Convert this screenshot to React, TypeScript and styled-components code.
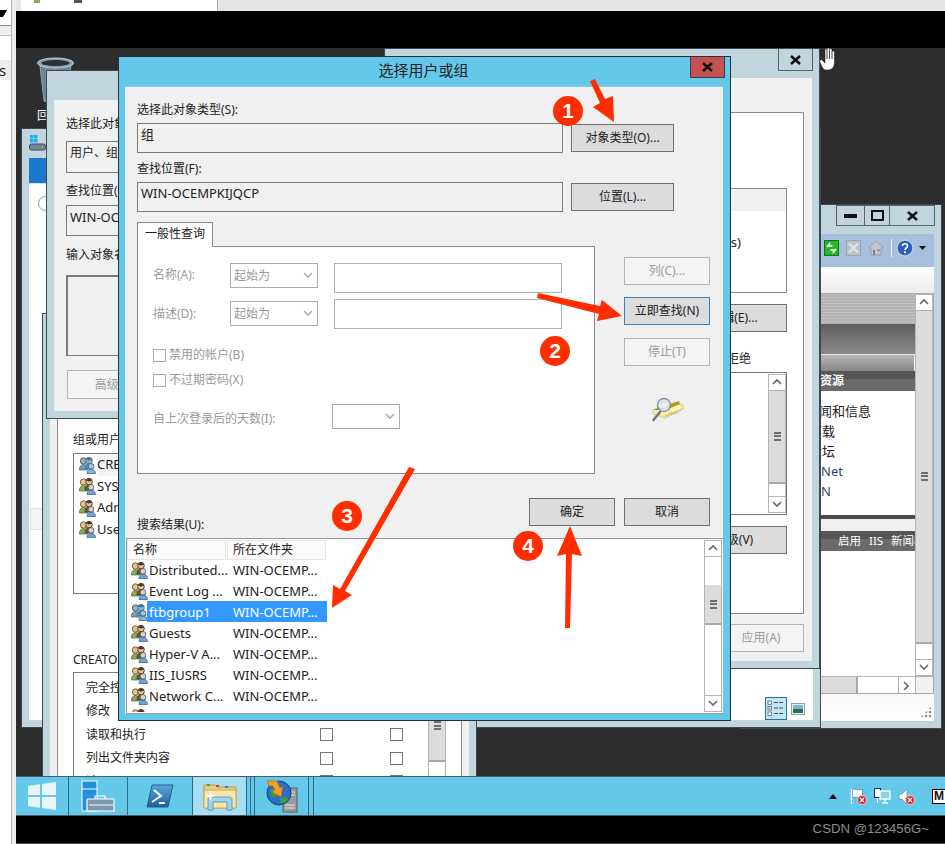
import React from "react";
import styled, { createGlobalStyle } from "styled-components";

const FONT = `"Noto Sans", "Noto Sans CJK SC", sans-serif`;
const CHROME = "#c2d5dc";
const ACCENT = "#63c8ea";
const SHEET = "#f0f0f0";
const EDGE = "#3c4a52";

const Global = createGlobalStyle`
  html, body { margin: 0; padding: 0; background: #000; }
  #root { width: 945px; height: 844px; overflow: hidden; }
  * { box-sizing: border-box; }
`;

const Screen = styled.div`
  position: relative;
  width: 945px;
  height: 844px;
  display: flex;
  overflow: hidden;
  font: 12px/16px ${FONT};
  color: #222;
  background: #000;
`;

/* ---------- left host strip ---------- */
const LeftStrip = styled.div`
  width: 16px;
  flex: none;
  background: #ededed;
`;
const LeftPane = styled.div`
  width: 12px;
  height: 100%;
  background: #fff;
  border-right: 1px solid #b5b5b5;
`;
const ComboStub = styled.div`
  height: 26px;
  border-bottom: 1px solid #8a8a8a;
  padding-top: 10px;
  display: flex;
`;
const StubBand = styled.div`
  height: 10px;
  background: #efefef;
  border-bottom: 1px solid #bdbdbd;
`;
const StubItem = styled.div`
  margin-top: 24px;
  height: 20px;
  background: #eeeeee;
  font-size: 15px;
  line-height: 20px;
  overflow: hidden;
  text-indent: -1px;
`;

/* ---------- main column ---------- */
const Column = styled.div`
  flex: 1;
  min-width: 0;
  display: flex;
  flex-direction: column;
`;
const TopBar = styled.div`
  height: 11px;
  flex: none;
  display: flex;
  background: #e6e6e8;
  padding-left: 5px;
`;
const TopPane = styled.div`
  width: 197px;
  background: #fff;
  border-right: 1px solid #a9a9a9;
  display: flex;
  align-items: flex-start;
  gap: 34px;
  padding-left: 13px;
`;
const TopMark = styled.span<{ $c: string; $w: number }>`
  display: block;
  width: ${(p) => p.$w}px;
  height: 3px;
  background: ${(p) => p.$c};
`;
const BlackBand = styled.div`
  height: 37px;
  flex: none;
  background: #000;
`;
const Desktop = styled.div`
  position: relative;
  height: 728px;
  flex: none;
  background: #2d2d2d;
  overflow: hidden;
`;
const RecycleBin = styled.div`
  position: absolute;
  left: 21px;
  top: 9px;
  width: 44px;
  text-align: left;
  color: #fff;
  font-size: 12px;
`;
const RecycleCaption = styled.div`
  margin-top: 2px;
  line-height: 14px;
`;

/* ---------- windows on the desktop ---------- */
const Win = styled.div<{ $x: number; $y: number; $w: number; $h: number }>`
  position: absolute;
  left: ${(p) => p.$x - 16}px;
  top: ${(p) => p.$y - 48}px;
  width: ${(p) => p.$w}px;
  height: ${(p) => p.$h}px;
  background: ${CHROME};
  border: 1px solid ${EDGE};
  display: flex;
  flex-direction: column;
  overflow: hidden;
`;
const Sheet = styled.div<{ $top: number; $bg?: string }>`
  margin: ${(p) => p.$top}px 7px 7px;
  flex: 1;
  min-height: 0;
  background: ${(p) => p.$bg ?? SHEET};
  display: flex;
  flex-direction: column;
`;
const CaptionClose = styled.div`
  position: absolute;
  right: 6px;
  top: -1px;
  width: 35px;
  height: 23px;
  border: 1px solid #55636b;
  display: flex;
  align-items: center;
  justify-content: center;
`;
const CaptionGroup = styled.div`
  position: absolute;
  right: 6px;
  top: 0;
  display: flex;
  height: 21px;
  border: 1px solid #55636b;
`;
const CaptionCell = styled.div<{ $w: number }>`
  width: ${(p) => p.$w}px;
  display: flex;
  align-items: center;
  justify-content: center;
  & + & { border-left: 1px solid #55636b; }
`;

const Field = styled.div<{ $h: number; $mt?: number; $small?: boolean; $inset?: boolean }>`
  height: ${(p) => p.$h}px;
  margin-top: ${(p) => p.$mt ?? 0}px;
  background: ${SHEET};
  border: 1px solid #7a7a7a;
  border-width: ${(p) => (p.$inset ? "2px 1px 1px 2px" : "1px")};
  padding: 3px 3px;
  font-size: ${(p) => (p.$small ? 12 : 13)}px;
  line-height: 16px;
  white-space: nowrap;
  overflow: hidden;
`;
const FieldLabel = styled.div<{ $mt?: number }>`
  margin-top: ${(p) => p.$mt ?? 0}px;
  font-size: 12px;
  line-height: 16px;
  white-space: nowrap;
`;
const Btn = styled.div<{ $w?: number; $h?: number; $mt?: number; $ml?: number; $state?: "off" | "focus" }>`
  width: ${(p) => (p.$w ? `${p.$w}px` : "100%")};
  height: ${(p) => p.$h ?? 28}px;
  margin-top: ${(p) => p.$mt ?? 0}px;
  margin-left: ${(p) => p.$ml ?? 0}px;
  flex: none;
  display: flex;
  align-items: center;
  justify-content: center;
  font-size: 12px;
  white-space: nowrap;
  background: ${(p) => (p.$state === "off" ? "#f4f4f4" : "#dcdcdc")};
  color: ${(p) => (p.$state === "off" ? "#9b9b9b" : "#222")};
  border: 1px solid
    ${(p) => (p.$state === "off" ? "#b5b5b5" : p.$state === "focus" ? "#3c7fb1" : "#707070")};
`;

/* ---------- scrollbars ---------- */
const ScrollTrack = styled.div`
  width: 18px;
  flex: none;
  height: 100%;
  display: flex;
  flex-direction: column;
  background: #fff;
  border-left: 1px solid #b4b4b4;
  border-right: 1px solid #b4b4b4;
`;
const ScrollBtn = styled.div`
  height: 17px;
  flex: none;
  display: flex;
  align-items: center;
  justify-content: center;
  background: #fff;
  border-top: 1px solid #b4b4b4;
  border-bottom: 1px solid #b4b4b4;
`;
const ScrollGap = styled.div<{ $h?: number }>`
  flex: ${(p) => (p.$h === undefined ? "1" : `0 0 ${p.$h}px`)};
  min-height: 0;
`;
const ScrollThumb = styled.div<{ $h: number }>`
  flex: 0 0 ${(p) => p.$h}px;
  background: #dcdcdc;
  border-bottom: 2px solid #a8a8a8;
  display: flex;
  align-items: center;
  justify-content: center;
`;
const Grip = styled.div`
  width: 7px;
  height: 9px;
  background: repeating-linear-gradient(#6e6e6e 0 2px, transparent 2px 3.5px);
`;

const Chevron = ({ dir, color = "#666" }: { dir: "up" | "down" | "right"; color?: string }) => {
  const d = dir === "up" ? "M1 6l4-4 4 4" : dir === "down" ? "M1 2l4 4 4-4" : "M2 1l4 4-4 4";
  return (
    <svg width="10" height="9" viewBox="0 0 10 9" fill="none" stroke={color} strokeWidth="1.6">
      <path d={d} />
    </svg>
  );
};

const ScrollBar = ({ gap, thumb }: { gap: number; thumb: number }) => (
  <ScrollTrack>
    <ScrollBtn><Chevron dir="up" /></ScrollBtn>
    <ScrollGap $h={gap} />
    <ScrollThumb $h={thumb}><Grip /></ScrollThumb>
    <ScrollGap />
    <ScrollBtn><Chevron dir="down" /></ScrollBtn>
  </ScrollTrack>
);

/* ---------- explorer behind everything ---------- */
const ExplorerIcon = styled.div`
  height: 29px;
  padding: 6px 0 0 7px;
`;
const Ribbon = styled.div`
  height: 26px;
  flex: none;
  border-bottom: 1px solid #dcdcdc;
`;
const FileTab = styled.div`
  width: 17px;
  height: 25px;
  background: #1979ca;
`;
const BackRound = styled.div`
  width: 15px;
  height: 15px;
  margin: 12px 0 0 9px;
  border-radius: 50%;
  border: 1px solid #9a9a9a;
  background: #fff;
`;
const PaleBox = styled.div`
  width: 13px;
  height: 22px;
  margin: 297px 0 0 1px;
  background: #f4f4f4;
  border: 1px solid #e2e2e2;
`;
const ExplorerFoot = styled.div`
  margin-top: auto;
  height: 23px;
  display: flex;
  justify-content: flex-end;
  align-items: center;
  gap: 4px;
  padding-right: 8px;
`;
const ViewBtn = styled.div<{ $on?: boolean }>`
  width: ${(p) => (p.$on ? "22px" : "14px")};
  height: ${(p) => (p.$on ? "23px" : "13px")};
  display: flex;
  align-items: center;
  justify-content: center;
  background: ${(p) => (p.$on ? "#c4e4f6" : "transparent")};
  border: ${(p) => (p.$on ? "1px solid #2f6f9f" : "none")};
`;

/* ---------- IE window ---------- */
const IEToolbar = styled.div`
  height: 33px;
  flex: none;
  background: #a5bfdc;
  display: flex;
  align-items: center;
  justify-content: flex-end;
  gap: 7px;
  padding: 0 8px 5px 0;
`;
const ToolSep = styled.span`
  width: 1px;
  height: 18px;
  margin-right: -3px;
  background: #eef4f9;
`;
const ToolCaretSlot = styled.span`
  display: flex;
  margin-left: -2px;
`;
const IEBand = styled.div`
  height: 27px;
  flex: none;
  background: linear-gradient(#fff, #ececec);
  border-bottom: 1px solid #a8a8a8;
`;
const IEFrame = styled.div`
  height: 400px;
  flex: none;
  background: #fff;
  border-right: 1px solid #a8a8a8;
  border-bottom: 1px solid #a8a8a8;
  display: flex;
  flex-direction: column;
`;
const IEMain = styled.div`
  height: 382px;
  flex: none;
  display: flex;
`;
const IEPage = styled.div`
  flex: 1;
  min-width: 0;
  display: flex;
  flex-direction: column;
  overflow: hidden;
  background: #fff;
`;
const Banner = styled.div<{ $h: number; $bg: string; $framed?: boolean }>`
  height: ${(p) => p.$h}px;
  flex: none;
  background: ${(p) => p.$bg};
  border-top: ${(p) => (p.$framed ? "1px solid #dfe3ea" : "none")};
  border-right: ${(p) => (p.$framed ? "1px solid #eef0f4" : "none")};
`;
const BannerBar = styled.div<{ $h: number; $pl: number; $bold?: boolean }>`
  height: ${(p) => p.$h}px;
  flex: none;
  color: #fff;
  font-size: ${(p) => (p.$bold ? 12 : 11.5)}px;
  font-weight: ${(p) => (p.$bold ? 700 : 400)};
  line-height: 20px;
  padding-left: ${(p) => p.$pl}px;
  word-spacing: 5px;
  white-space: nowrap;
  overflow: hidden;
  background: linear-gradient(#565656 0 40%, #6a6a6a 40% 100%);
`;
const LinkList = styled.div`
  flex: 0 0 124px;
  padding-top: 10px;
  font-size: 13px;
  line-height: 20px;
  white-space: nowrap;
`;
const LinkItem = styled.div<{ $pl: number; $blue?: boolean }>`
  padding-left: ${(p) => p.$pl}px;
  color: ${(p) => (p.$blue ? "#2c4a6a" : "#222")};
`;
const HBar = styled.div`
  height: 17px;
  flex: none;
  display: flex;
  background: #fff;
  border-top: 1px solid #b4b4b4;
`;
const HThumb = styled.div`
  flex: 1;
  background: #dcdcdc;
  border-right: 2px solid #a8a8a8;
`;
const HGap = styled.div`
  width: 40px;
`;
const HBtn = styled.div`
  width: 17px;
  display: flex;
  align-items: center;
  justify-content: center;
  border-left: 1px solid #b4b4b4;
`;
const HCorner = styled.div`
  width: 18px;
  background: #f0f0f0;
  border-left: 1px solid #b4b4b4;
`;
const IEStatus = styled.div`
  flex: 1;
  background: linear-gradient(#f8f8f8, #fff);
  display: flex;
  justify-content: flex-end;
  align-items: flex-end;
  padding: 0 2px 3px 0;
`;
const StatusGrip = styled.div`
  width: 12px;
  height: 12px;
  background: radial-gradient(circle at 2px 2px, #888 0 1.4px, transparent 1.6px) 0 0 / 4px 4px;
  clip-path: polygon(100% 0, 100% 100%, 0 100%);
`;

/* ---------- lower left properties ---------- */
const WhitePanel = styled.div<{ $mt: number; $pt: number }>`
  margin-top: ${(p) => p.$mt}px;
  flex: 1;
  min-height: 0;
  background: #fff;
  border: 1px solid #8a8a8a;
  padding: ${(p) => p.$pt}px 15px 0;
`;
const UserBox = styled.div<{ $h: number; $mt?: number }>`
  height: ${(p) => p.$h}px;
  margin-top: ${(p) => p.$mt ?? 0}px;
  border: 1px solid #7a7a7a;
  padding: 0 0 0 5px;
  background: #fff;
  overflow: hidden;
`;
const UserRow = styled.div`
  height: 21.5px;
  display: flex;
  align-items: center;
  gap: 1px;
  font-size: 13px;
  white-space: nowrap;
`;
const UserName = styled.span<{ $hover?: boolean }>`
  flex: 1;
  height: 100%;
  line-height: 21px;
  background: ${(p) => (p.$hover ? "#f4f4f4" : "transparent")};
`;
const PermBox = styled.div`
  height: 140px;
  margin-top: 4px;
  border: 1px solid #7a7a7a;
  border-right: none;
  display: flex;
  overflow: hidden;
`;
const PermRows = styled.div`
  flex: 1;
  padding: 3px 0 0 12px;
`;
const PermRow = styled.div`
  height: 23.5px;
  display: grid;
  grid-template-columns: 234px 70px 13px;
  align-items: center;
  font-size: 12px;
`;
const Check = styled.span<{ $off?: boolean }>`
  display: block;
  width: 13px;
  height: 13px;
  flex: none;
  background: #fff;
  border: 1px solid ${(p) => (p.$off ? "#adadad" : "#777")};
`;

/* ---------- right properties window ---------- */
const PropsPanel = styled.div`
  margin: 34px 0 0 0;
  height: 502px;
  background: #fff;
  border: 1px solid #8a8a8a;
  padding: 75px 16px 0 16px;
  display: flex;
  flex-direction: column;
  align-items: flex-end;
`;
const PropsList = styled.div`
  width: 379px;
  height: 105px;
  border: 1px solid #8a8a8a;
  flex: none;
`;
const PropsHead = styled.div`
  height: 22px;
  background: #f0f0f0;
`;
const PropsItem = styled.div`
  margin-top: 23px;
  padding-right: 45px;
  text-align: right;
  font-size: 13px;
  white-space: nowrap;
`;
const DenyHead = styled.div`
  margin-top: 19px;
  padding-right: 36px;
  font-size: 12px;
`;
const PermList = styled.div`
  margin-top: 5px;
  width: 379px;
  height: 143px;
  border: 1px solid #7a7a7a;
  border-right-width: 1px;
  padding: 1px 0;
  flex: none;
  display: flex;
  justify-content: flex-end;
`;
const PropsFoot = styled.div`
  margin-top: 10px;
  display: flex;
  justify-content: flex-end;
`;
const SheetInset = styled.div<{ $pad: number }>`
  padding: 0 ${(p) => p.$pad}px;
  display: flex;
  flex-direction: column;
  flex: 1;
  min-height: 0;
`;
const BackForm = styled.div`
  padding: 16px 12px 0;
`;

/* ---------- main dialog ---------- */
const Dialog = styled(Win)`
  background: ${ACCENT};
  border-color: #22313a;
`;
const DialogBar = styled.div`
  height: 29px;
  flex: none;
  font-size: 15px;
  line-height: 27px;
  text-align: center;
  padding-right: 2px;
`;
const DialogClose = styled.div`
  position: absolute;
  right: 5px;
  top: -1px;
  width: 35px;
  height: 22px;
  background: #c75050;
  border: 1px solid #33424c;
  display: flex;
  align-items: center;
  justify-content: center;
`;
const DialogBody = styled.div`
  margin: 0 7px 6px 6px;
  flex: 1;
  min-height: 0;
  background: ${SHEET};
  display: flex;
  flex-direction: column;
  border-top: 1px solid #8fc6db;
  padding-top: 15px;
`;
const Rowed = styled.div<{ $mt?: number }>`
  margin-top: ${(p) => p.$mt ?? 0}px;
  padding: 0 49px 0 12px;
`;
const PickRow = styled.div`
  margin-top: 5px;
  display: flex;
  gap: 8px;
  align-items: flex-start;
`;
const ReadBox = styled.div`
  flex: 1;
  height: 30px;
  border: 1px solid #7a7a7a;
  padding: 2px 3px;
  font-size: 13px;
  line-height: 16px;
`;
const PickBtnWrap = styled.div`
  padding-top: 1px;
`;
const QuerySplit = styled.div`
  margin-top: 10px;
  padding: 0 13px 0 12px;
  display: flex;
  justify-content: space-between;
`;
const QueryArea = styled.div`
  width: 458px;
`;
const TabHead = styled.div`
  position: relative;
  z-index: 1;
  width: 76px;
  height: 25px;
  padding: 3px 0 0 7px;
  font-size: 12px;
  line-height: 16px;
  background: #fff;
  border: 1px solid #8a8a94;
  border-bottom: none;
`;
const TabPanel = styled.div`
  margin-top: -1px;
  height: 228px;
  background: #fff;
  border: 1px solid #8a8a94;
  padding: 16px 0 0 15px;
  color: #9a9a9a;
`;
const CritRow = styled.div<{ $mt?: number }>`
  margin-top: ${(p) => p.$mt ?? 0}px;
  display: grid;
  grid-template-columns: 77px 88px 228px;
  column-gap: 0;
  height: 30px;
  align-items: start;
`;
const CritLabel = styled.div<{ $pt: number }>`
  padding-top: ${(p) => p.$pt}px;
  line-height: 20px;
  white-space: nowrap;
`;
const CritBox = styled.div`
  margin-left: 16px;
  width: 228px;
  height: 30px;
  border: 1px solid #b0b0b0;
`;
const Select = styled.div<{ $w: number; $mt?: number }>`
  width: ${(p) => p.$w}px;
  height: 25px;
  margin-top: ${(p) => p.$mt ?? 0}px;
  border: 1px solid #adadad;
  padding: 0 4px 0 3px;
  display: flex;
  align-items: center;
  justify-content: space-between;
  font-size: 12px;
  color: #999;
`;
const CheckRow = styled.div<{ $mt: number }>`
  margin-top: ${(p) => p.$mt}px;
  display: flex;
  align-items: center;
  gap: 3px;
  height: 16px;
  white-space: nowrap;
`;
const DayRow = styled.div`
  margin-top: 16px;
  display: flex;
  align-items: center;
  height: 25px;
  white-space: nowrap;
`;
const DayLabel = styled.div`
  width: 179px;
  padding-top: 4px;
`;
const ActionColumn = styled.div`
  width: 86px;
  padding-top: 35px;
  display: flex;
  flex-direction: column;
`;
const SearchArt = styled.div`
  margin: 31px 0 0 27px;
`;
const ResultHead = styled.div`
  margin-top: 24px;
  padding: 0 13px 0 12px;
  height: 28px;
  display: flex;
  gap: 9px;
  align-items: flex-start;
  position: relative;
`;
const ResultLabel = styled.div`
  margin: 19px auto 0 0;
  line-height: 16px;
`;
const ResultList = styled.div`
  margin: 12px 0 0 1px;
  flex: 1;
  min-height: 0;
  display: flex;
  background: #fff;
  border: 1px solid #9a9a9a;
  border-right: none;
  padding: 1px 1px 1px 0;
  overflow: hidden;
`;
const ResultMain = styled.div`
  flex: 1;
  min-width: 0;
  overflow: hidden;
`;
const ColHead = styled.div`
  display: flex;
  height: 19px;
  background: #fff;
`;
const ColCell = styled.div<{ $w: number }>`
  width: ${(p) => p.$w}px;
  height: 20px;
  margin-right: 1px;
  background: #fbfbfb;
  border: 1px solid #e6e6e6;
  padding-left: 5px;
  line-height: 18px;
  font-size: 12px;
`;
const ResultRow = styled.div`
  height: 21px;
  display: flex;
  align-items: center;
  white-space: nowrap;
  font-size: 13px;
`;
const RowIcon = styled.div`
  width: 20px;
  padding-left: 4px;
  display: flex;
  flex: none;
`;
const RowCells = styled.div<{ $sel?: boolean }>`
  width: 180px;
  height: 21px;
  display: grid;
  grid-template-columns: 84px 96px;
  align-items: center;
  padding-left: 2px;
  background: ${(p) => (p.$sel ? "#3399ff" : "transparent")};
  color: ${(p) => (p.$sel ? "#fff" : "#222")};
`;

/* ---------- taskbar ---------- */
const Taskbar = styled.div`
  height: 40px;
  flex: none;
  background: ${ACCENT};
  border-top: 1px solid #4f5a60;
  border-bottom: 1px solid #4f5a60;
  display: flex;
  align-items: stretch;
`;
const TaskCell = styled.div<{ $w: number; $active?: boolean }>`
  width: ${(p) => p.$w}px;
  flex: none;
  display: flex;
  align-items: center;
  justify-content: center;
  border-right: 1px solid #2f6a80;
  background: ${(p) => (p.$active ? "#a6dff1" : "transparent")};
`;
const Tray = styled.div`
  margin-left: auto;
  display: flex;
  align-items: center;
  gap: 7px;
`;
const TrayArrow = styled.div`
  margin-right: 6px;
  width: 0;
  height: 0;
  border-left: 4px solid transparent;
  border-right: 4px solid transparent;
  border-bottom: 5px solid #111;
`;
const ImeBox = styled.div`
  margin-left: 10px;
  width: 13px;
  height: 15px;
  background: #fff;
  border: 1px solid #000;
  border-right: none;
  font: 700 12px/13px "Liberation Sans", sans-serif;
  color: #111;
  overflow: hidden;
  padding-left: 1px;
`;
const BottomBlack = styled.div`
  flex: 1;
  background: #000;
  display: flex;
  justify-content: flex-end;
  align-items: center;
  padding: 0 16px 1px 0;
  border-bottom: 1px solid #444;
`;
const Watermark = styled.div`
  font: 13.2px/16px "Liberation Sans", sans-serif;
  color: #8d8d8d;
`;

/* ---------- annotation overlay ---------- */
const Overlay = styled.svg`
  position: absolute;
  left: 0;
  top: 0;
  pointer-events: none;
`;
const Badge = styled.div<{ $x: number; $y: number }>`
  position: absolute;
  left: ${(p) => p.$x - 15}px;
  top: ${(p) => p.$y - 15}px;
  width: 30px;
  height: 30px;
  border-radius: 50%;
  background: #ff2d00;
  color: #fff;
  font: 700 21px/30px "Liberation Sans", sans-serif;
  text-align: center;
`;
const HandCursor = styled.svg`
  position: absolute;
  left: 819px;
  top: 47px;
`;

/* ---------- drawn icons ---------- */
const Users = ({ sel }: { sel?: boolean }) => {
  const p = sel
    ? { a: "#6f9fc4", b: "#5a8db5", c: "#88b4d8", h: "#8fb2cf", d: "#4a6f90", e: "#2f5878" }
    : { a: "#86ac55", b: "#6a5a3e", c: "#6ea2da", h: "#e6c08e", d: "#3d3226", e: "#34568a" };
  return (
    <svg width="17" height="18" viewBox="0 0 17 18" style={{ flex: "none" }}>
      <path d="M0.5 13c0-3 2-4.5 4-4.5s4 1.5 4 4.5v1h-8z" fill={p.a} stroke="#4a6b33" strokeWidth=".7" />
      <circle cx="4.5" cy="5" r="3.2" fill={p.h} stroke="#5c4a2a" strokeWidth=".8" />
      <path d="M6 12c0-3 2-4.5 4-4.5s4 1.500 4 4.500v1H6z" fill={p.b} stroke={p.d} strokeWidth=".7" />
      <circle cx="10" cy="4.600" r="3.300" fill={p.h} stroke={p.d} strokeWidth=".9" />
      <path d="M7 3.500c1-2 5-2 6 0l-3 1z" fill={p.d} />
      <path d="M8 17.500c0-3 2-4.500 4-4.500s4.500 1.500 4.500 4.500z" fill={p.c} stroke={p.e} strokeWidth=".7" />
      <circle cx="12" cy="10.300" r="2.800" fill={sel ? "#a8c6de" : "#eccfa8"} stroke={p.e} strokeWidth=".8" />
    </svg>
  );
};

const SearchBook = () => (
  <svg width="33" height="26" viewBox="0 0 33 26">
    <path d="M2 13l21-8 9 3v4L14 21 2 17z" fill="#f5e9a8" stroke="#c7b968" strokeWidth=".6" />
    <path d="M2 13l11 5 19-7-9-6z" fill="#fbf2b8" />
    <path d="M14 9l14-5 1 3-12 5z" fill="#b8961c" />
    <path d="M2 13l8-3 3 2z" fill="#6a5a20" />
    <path d="M14 21v-3l18-7v1z" fill="#e0d080" />
    <path d="M18 16h10M20 18l9-4" stroke="#a89a50" strokeWidth=".7" strokeDasharray="1 1" />
    <line x1="9" y1="15" x2="2.500" y2="23" stroke="#6d7a88" strokeWidth="2.600" strokeLinecap="round" />
    <circle cx="13" cy="8" r="6.500" fill="#d6e6f2" fillOpacity=".9" stroke="#7890a8" strokeWidth="1.300" />
    <path d="M8.500 9c2-3 6-4 9-2-1 4-6 6-9 2z" fill="#f2f2e0" opacity=".8" />
  </svg>
);

const Bin = () => (
  <svg width="37" height="46" viewBox="0 0 37 46">
    <path d="M3 9l4 35c4 2 19 2 23 0l4-35z" fill="#6c8496" stroke="#8ea3b2" />
    <path d="M9 12l3 30M18 12v30" stroke="#a8bac6" strokeWidth="1.500" opacity=".5" />
    <ellipse cx="18.500" cy="6" rx="18" ry="5" fill="#8b9aa5" stroke="#c7d0d6" />
    <ellipse cx="18.500" cy="6" rx="14" ry="3" fill="#28323a" />
  </svg>
);

const WinGlyph = ({ size, color }: { size: number; color: string }) => (
  <svg width={size} height={size} viewBox="0 0 28 28" fill={color}>
    <path d="M0 4l12-1.700V13H0zM14 2l14-2v13H14zM0 15h12v10.700L0 24zM14 15h14v13l-14-2z" />
  </svg>
);

const DriveIcon = () => (
  <svg width="17" height="18" viewBox="0 0 17 18">
    <g fill="#13b5f1">
      <rect x="1" y="0" width="3.500" height="3.500" /><rect x="5" y="0" width="3.500" height="3.500" />
      <rect x="1" y="4" width="3.500" height="3.500" /><rect x="5" y="4" width="3.500" height="3.500" />
    </g>
    <rect x="0.500" y="9" width="16" height="6" rx="2" fill="#6f8792" stroke="#3d4f58" />
    <rect x="12" y="11" width="2" height="2" fill="#7bc043" />
  </svg>
);

const ServerTools = () => (
  <svg width="34" height="34" viewBox="0 0 34 34">
    <rect x="1" y="2" width="15" height="30" fill="#2490dc" stroke="#fff" />
    <line x1="1" y1="10" x2="16" y2="10" stroke="#fff" />
    <path d="M10 20h22a1 1 0 0 1 1 1v11H6V21a1 1 0 0 1 1-1h3" fill="#7d98ab" stroke="#fff" strokeWidth="1.200" />
    <path d="M14 20v-3h10v3" fill="none" stroke="#fff" strokeWidth="1.200" />
    <path d="M8 26h24" stroke="#fff" />
  </svg>
);

const PowerShell = () => (
  <svg width="28" height="24" viewBox="0 0 28 24">
    <defs>
      <linearGradient id="psg" x1="0" y1="0" x2="0" y2="1">
        <stop offset="0" stopColor="#5aa6dc" /><stop offset="1" stopColor="#1f5f9c" />
      </linearGradient>
    </defs>
    <path d="M6 1h21l-5 22H1z" fill="url(#psg)" stroke="#2a5f88" />
    <path d="M8 6l7 6-9 6" fill="none" stroke="#fff" strokeWidth="2" />
    <path d="M13 19h6" stroke="#fff" strokeWidth="2" />
  </svg>
);

const FolderIcon = () => (
  <svg width="34" height="30" viewBox="0 0 34 30">
    <path d="M1 4h12l2 2h18v21H1z" fill="#e9cd84" stroke="#b59a50" />
    <rect x="4" y="3" width="3" height="2" fill="#3fae3f" />
    <rect x="13" y="4" width="3" height="2" fill="#d9403a" />
    <rect x="22" y="5" width="3" height="2" fill="#3a7fd9" />
    <rect x="1" y="9" width="32" height="18" fill="#f9e7a8" stroke="#c6ab5c" />
    <path d="M5 29V19c0-3 2-3 4-3h16c2 0 4 0 4 3v10h-5V21H10v8z" fill="#9fd6ea" stroke="#5b9cc0" />
    <path d="M7 10l2 4 4 1-4 1-2 4-1-4-4-1 4-1z" fill="#fff" opacity=".8" />
  </svg>
);

const IisIcon = () => (
  <svg width="32" height="34" viewBox="0 0 32 34">
    <rect x="17" y="9" width="14" height="24" fill="#9a9a9a" stroke="#5f5f5f" />
    <path d="M19 13h10M19 16h10M19 26h10M19 29h10" stroke="#e6e6e6" />
    <circle cx="13" cy="14" r="12" fill="#2a6fc4" stroke="#17407a" />
    <path d="M4 12c4-5 7-2 8 1s-2 6-6 5zM14 20c3-2 7-2 8 0-2 4-5 5-8 3z" fill="#3ea23a" />
    <path d="M1 2h10l3 7 3-2-2 11-9-5 3-2-2-4H3z" fill="#f2a11f" stroke="#a96a10" strokeWidth=".6" />
  </svg>
);

const TrayFlag = () => (
  <svg width="17" height="17" viewBox="0 0 17 17">
    <path d="M1.500 1v15" stroke="#fff" strokeWidth="1.500" />
    <path d="M2.500 1.500c3-1 5 1 10 0v8c-4 1-7-1-10 0z" fill="#fff" stroke="#4a6d84" strokeWidth=".6" />
    <circle cx="12" cy="12" r="4.500" fill="#e02b2b" stroke="#fff" strokeWidth=".6" />
    <path d="M10 10l4 4M14 10l-4 4" stroke="#fff" strokeWidth="1.200" />
  </svg>
);
const TrayNet = () => (
  <svg width="17" height="17" viewBox="0 0 17 17">
    <rect x="0.500" y="0.500" width="6" height="9" fill="#fff" stroke="#1e3a4a" />
    <rect x="6" y="3" width="10" height="8" fill="#8ad1ec" stroke="#fff" strokeWidth="1.300" />
    <path d="M11 11v3M8 15h6M3.500 10v5" stroke="#fff" strokeWidth="1.300" />
  </svg>
);
const TraySound = () => (
  <svg width="17" height="17" viewBox="0 0 17 17">
    <path d="M1 6h3l5-5v15l-5-5H1z" fill="#fff" stroke="#5d7f94" strokeWidth=".6" />
    <circle cx="12" cy="12" r="4.500" fill="#e02b2b" stroke="#fff" strokeWidth=".6" />
    <path d="M10 10l4 4M14 10l-4 4" stroke="#fff" strokeWidth="1.200" />
  </svg>
);

const ToolRefresh = () => (
  <svg width="15" height="16" viewBox="0 0 15 16">
    <rect x="0.500" y="0.500" width="14" height="15" fill="#2bb52b" stroke="#0d7a0d" />
    <path d="M3 7l2.500-3v2h3M12 9l-2.500 3v-2h-3" fill="none" stroke="#fff" strokeWidth="1.700" />
  </svg>
);
const ToolStop = () => (
  <svg width="15" height="16" viewBox="0 0 15 16">
    <rect x="0.500" y="0.500" width="14" height="15" fill="#b9c4cd" stroke="#9aa6b0" />
    <path d="M3 3.500l9 9M12 3.500l-9 9" stroke="#dfe4e8" strokeWidth="2" />
  </svg>
);
const ToolHome = () => (
  <svg width="16" height="16" viewBox="0 0 16 16">
    <path d="M8 1L0.500 8H3v7h10V8h2.500z" fill="#c4c8cc" stroke="#8f979e" strokeWidth=".7" />
    <rect x="9.500" y="9" width="2" height="2.500" fill="#7f8890" />
    <rect x="5" y="10" width="2" height="5" fill="#7f8890" />
  </svg>
);
const ToolHelp = () => (
  <svg width="18" height="18" viewBox="0 0 18 18">
    <circle cx="9" cy="9" r="8" fill="#2d5ec4" stroke="#c8d2de" strokeWidth="1.300" />
    <path d="M6.500 7c0-3 5-3 5 0 0 2-2.500 2-2.500 4" fill="none" stroke="#fff" strokeWidth="1.700" />
    <rect x="8" y="12.300" width="2" height="2" fill="#fff" />
  </svg>
);
const ToolCaret = () => (
  <svg width="7" height="4" viewBox="0 0 7 4"><path d="M0 0h7L3.500 4z" fill="#111" /></svg>
);

const DetailsIcon = () => (
  <svg width="18" height="17" viewBox="0 0 18 17">
    <g fill="#fff" stroke="#33566f" strokeWidth=".7">
      <rect x="1" y="1" width="3.500" height="3.500" />
      <rect x="1" y="6.500" width="3.500" height="3.500" />
      <rect x="1" y="12" width="3.500" height="3.500" />
    </g>
    <rect x="2.200" y="7.700" width="1.200" height="1.200" fill="#d0342c" />
    <path d="M7 2.500h10M7 8h10M7 13.500h10" stroke="#33566f" strokeDasharray="4 1" />
  </svg>
);
const PreviewIcon = () => (
  <svg width="14" height="12" viewBox="0 0 14 12">
    <rect x="0.500" y="0.500" width="13" height="11" fill="#e9f1f5" stroke="#8aa0ad" />
    <rect x="2" y="2" width="10" height="4" fill="#7fb5d8" />
    <rect x="2" y="6" width="10" height="4" fill="#2f6d4c" />
  </svg>
);

const CaptionX = ({ color = "#111" }: { color?: string }) => (
  <svg width="11" height="10" viewBox="0 0 11 10" fill="none" stroke={color} strokeWidth="2.500">
    <path d="M1 1l9 8M10 1l-9 8" />
  </svg>
);

const results = [
  ["Distributed...", "WIN-OCEMP..."],
  ["Event Log ...", "WIN-OCEMP..."],
  ["ftbgroup1", "WIN-OCEMP..."],
  ["Guests", "WIN-OCEMP..."],
  ["Hyper-V A...", "WIN-OCEMP..."],
  ["IIS_IUSRS", "WIN-OCEMP..."],
  ["Network C...", "WIN-OCEMP..."],
  ["Network ...", "WIN-OCEMP..."],
];

export default function App() {
  return (
    <Screen>
      <Global />
      <LeftStrip>
        <LeftPane>
          <ComboStub>
            <svg width="8" height="7" viewBox="0 0 8 7"><path d="M0 0h7L3 7H0z" fill="#000" /></svg>
          </ComboStub>
          <StubBand />
          <StubItem>s</StubItem>
        </LeftPane>
      </LeftStrip>

      <Column>
        <TopBar>
          <TopPane>
            <TopMark $c="#7db04a" $w={6} />
            <TopMark $c="#555" $w={8} />
          </TopPane>
        </TopBar>
        <BlackBand />
        <Desktop>
          <RecycleBin>
            <Bin />
            <RecycleCaption>回收站</RecycleCaption>
          </RecycleBin>

          {/* IE window */}
          <Win $x={740} $y={204} $w={202} $h={525}>
            <CaptionGroup>
              <CaptionCell $w={27}>
                <svg width="13" height="5"><rect y="1" width="13" height="4" fill="#111" /></svg>
              </CaptionCell>
              <CaptionCell $w={25}>
                <svg width="13" height="11"><rect x="1" y="1" width="11" height="9" fill="none" stroke="#111" strokeWidth="2" /></svg>
              </CaptionCell>
              <CaptionCell $w={45}><CaptionX /></CaptionCell>
            </CaptionGroup>
            <Sheet $top={29} $bg="transparent">
              <IEToolbar>
                <ToolRefresh />
                <ToolStop />
                <ToolHome />
                <ToolSep />
                <ToolHelp />
                <ToolCaretSlot><ToolCaret /></ToolCaretSlot>
              </IEToolbar>
              <IEBand />
              <IEFrame>
                <IEMain>
                  <IEPage>
                    <Banner $h={30} $bg="repeating-linear-gradient(#c2c2c2 0 1px, #b2b2b2 1px 3px)" />
                    <Banner $h={30} $bg="linear-gradient(#5f5f5f, #8a8a8a)" />
                    <Banner $h={17} $framed $bg="linear-gradient(#b8b8b8, #868686)" />
                    <BannerBar $h={20} $pl={72} $bold>资源</BannerBar>
                    <LinkList>
                      <LinkItem $pl={58}>新闻和信息</LinkItem>
                      <LinkItem $pl={61}>下载</LinkItem>
                      <LinkItem $pl={61}>论坛</LinkItem>
                      <LinkItem $pl={73} $blue>Net</LinkItem>
                      <LinkItem $pl={73} $blue>N</LinkItem>
                    </LinkList>
                    <Banner $h={4} $bg="#4a4a4a" />
                    <Banner $h={12} $bg="#f0f0f0" />
                    <BannerBar $h={20} $pl={90}>启用 IIS 新闻稿</BannerBar>
                  </IEPage>
                  <ScrollBar gap={0} thumb={333} />
                </IEMain>
                <HBar>
                  <HThumb />
                  <HGap />
                  <HBtn><Chevron dir="right" /></HBtn>
                  <HCorner />
                </HBar>
              </IEFrame>
              <IEStatus><StatusGrip /></IEStatus>
            </Sheet>
          </Win>

          {/* explorer */}
          <Win $x={21} $y={128} $w={800} $h={600}>
            <ExplorerIcon><DriveIcon /></ExplorerIcon>
            <Sheet $top={0} $bg="#fff">
              <Ribbon><FileTab /></Ribbon>
              <BackRound />
              <PaleBox />
              <ExplorerFoot>
                <ViewBtn $on><DetailsIcon /></ViewBtn>
                <ViewBtn><PreviewIcon /></ViewBtn>
              </ExplorerFoot>
            </Sheet>
          </Win>

          {/* folder properties, lower left */}
          <Win $x={42} $y={313} $w={435} $h={480}>
            <Sheet $top={29}>
              <SheetInset $pad={7}>
                <WhitePanel $mt={17} $pt={71}>
                  <FieldLabel>组或用户名(G):</FieldLabel>
                  <UserBox $h={141} $mt={5}>
                    <UserRow><Users sel /><UserName $hover>CREATOR OWNER</UserName></UserRow>
                    <UserRow><Users /><UserName>SYSTEM</UserName></UserRow>
                    <UserRow><Users /><UserName>Administrators</UserName></UserRow>
                    <UserRow><Users /><UserName>Users</UserName></UserRow>
                  </UserBox>
                  <FieldLabel $mt={58}>CREATOR OWNER 的权限(P)</FieldLabel>
                  <PermBox>
                    <PermRows>
                      <PermRow>完全控制<Check /><Check /></PermRow>
                      <PermRow>修改<Check /><Check /></PermRow>
                      <PermRow>读取和执行<Check /><Check /></PermRow>
                      <PermRow>列出文件夹内容<Check /><Check /></PermRow>
                      <PermRow>读取<Check /><Check /></PermRow>
                    </PermRows>
                    <ScrollTrack>
                      <ScrollBtn />
                      <ScrollThumb $h={72}><Grip /></ScrollThumb>
                      <ScrollGap />
                    </ScrollTrack>
                  </PermBox>
                </WhitePanel>
              </SheetInset>
            </Sheet>
          </Win>

          {/* properties, right */}
          <Win $x={384} $y={48} $w={436} $h={621}>
            <CaptionClose><CaptionX /></CaptionClose>
            <Sheet $top={29}>
              <SheetInset $pad={8}>
                <PropsPanel>
                  <PropsList>
                    <PropsHead />
                    <PropsItem>WIN-OCEMPKIJQCP\Users)</PropsItem>
                  </PropsList>
                  <Btn $w={106} $mt={11}>编辑(E)...</Btn>
                  <DenyHead>拒绝</DenyHead>
                  <PermList><ScrollBar gap={0} thumb={93} /></PermList>
                  <Btn $w={106} $mt={11}>高级(V)</Btn>
                </PropsPanel>
                <PropsFoot><Btn $w={86} $state="off">应用(A)</Btn></PropsFoot>
              </SheetInset>
            </Sheet>
          </Win>

          {/* earlier select dialog */}
          <Win $x={46} $y={70} $w={400} $h={349}>
            <Sheet $top={29}>
              <BackForm>
                <FieldLabel>选择此对象类型(S):</FieldLabel>
                <Field $h={32} $mt={9} $small>用户、组或内置安全主体</Field>
                <FieldLabel $mt={10}>查找位置(F):</FieldLabel>
                <Field $h={31} $mt={6}>WIN-OCEMPKIJQCP</Field>
                <FieldLabel $mt={11}>输入对象名称来选择(示例)(E):</FieldLabel>
                <Field $h={81} $mt={12} $inset />
                <Btn $w={104} $h={29} $mt={14} $ml={1} $state="off">高级(A)...</Btn>
              </BackForm>
            </Sheet>
          </Win>

          {/* active dialog */}
          <Dialog $x={118} $y={56} $w={613} $h={665}>
            <DialogBar>选择用户或组</DialogBar>
            <DialogClose><CaptionX /></DialogClose>
            <DialogBody>
              <Rowed>
                <FieldLabel>选择此对象类型(S):</FieldLabel>
                <PickRow>
                  <ReadBox>组</ReadBox>
                  <PickBtnWrap><Btn $w={103} $h={28}>对象类型(O)...</Btn></PickBtnWrap>
                </PickRow>
              </Rowed>
              <Rowed $mt={8}>
                <FieldLabel>查找位置(F):</FieldLabel>
                <PickRow>
                  <ReadBox>WIN-OCEMPKIJQCP</ReadBox>
                  <PickBtnWrap><Btn $w={103} $h={28}>位置(L)...</Btn></PickBtnWrap>
                </PickRow>
              </Rowed>
              <QuerySplit>
                <QueryArea>
                  <TabHead>一般性查询</TabHead>
                  <TabPanel>
                    <CritRow>
                      <CritLabel $pt={2}>名称(A):</CritLabel>
                      <Select $w={88}>起始为<Chevron dir="down" color="#b0b0b0" /></Select>
                      <CritBox />
                    </CritRow>
                    <CritRow $mt={6}>
                      <CritLabel $pt={5}>描述(D):</CritLabel>
                      <Select $w={88} $mt={2}>起始为<Chevron dir="down" color="#b0b0b0" /></Select>
                      <CritBox />
                    </CritRow>
                    <CheckRow $mt={18}><Check $off />禁用的帐户(B)</CheckRow>
                    <CheckRow $mt={9}><Check $off />不过期密码(X)</CheckRow>
                    <DayRow>
                      <DayLabel>自上次登录后的天数(I):</DayLabel>
                      <Select $w={68}><span /><Chevron dir="down" color="#b0b0b0" /></Select>
                    </DayRow>
                  </TabPanel>
                </QueryArea>
                <ActionColumn>
                  <Btn $state="off">列(C)...</Btn>
                  <Btn $state="focus" $mt={12}>立即查找(N)</Btn>
                  <Btn $state="off" $mt={13}>停止(T)</Btn>
                  <SearchArt><SearchBook /></SearchArt>
                </ActionColumn>
              </QuerySplit>
              <ResultHead>
                <ResultLabel>搜索结果(U):</ResultLabel>
                <Btn $w={86}>确定</Btn>
                <Btn $w={86}>取消</Btn>
              </ResultHead>
              <ResultList>
                <ResultMain>
                  <ColHead>
                    <ColCell $w={99}>名称</ColCell>
                    <ColCell $w={99}>所在文件夹</ColCell>
                  </ColHead>
                  {results.map(([name, folder], i) => (
                    <ResultRow key={i}>
                      <RowIcon><Users sel={i === 2} /></RowIcon>
                      <RowCells $sel={i === 2}>
                        <span>{name}</span>
                        <span>{folder}</span>
                      </RowCells>
                    </ResultRow>
                  ))}
                </ResultMain>
                <ScrollBar gap={28} thumb={40} />
              </ResultList>
            </DialogBody>
          </Dialog>
        </Desktop>

        <Taskbar>
          <TaskCell $w={53}><WinGlyph size={28} color="#e8f6fb" /></TaskCell>
          <TaskCell $w={59}><ServerTools /></TaskCell>
          <TaskCell $w={65}><PowerShell /></TaskCell>
          <TaskCell $w={54} $active><FolderIcon /></TaskCell>
          <TaskCell $w={4} />
          <TaskCell $w={4} />
          <TaskCell $w={54}><IisIcon /></TaskCell>
          <TaskCell $w={5} />
          <Tray>
            <TrayArrow />
            <TrayFlag />
            <TrayNet />
            <TraySound />
            <ImeBox>M</ImeBox>
          </Tray>
        </Taskbar>
        <BottomBlack><Watermark>CSDN @123456G~</Watermark></BottomBlack>
      </Column>

      {/* red annotations */}
      <Overlay width="945" height="844" viewBox="0 0 945 844">
        <g fill="#ff2d00">
          <polygon points="590,81 595,79 605,99 613,96 614,122 593,107 600,103" />
          <polygon points="538,293 600,306 602,300 622,316 597,321 599,314 537,298" />
          <polygon points="409,467 415,469 345,591 352,595 332,608 333,585 340,589" />
          <polygon points="570,526 582,556 572,554 570,628 565,628 566,554 557,556" />
        </g>
      </Overlay>
      <Badge $x={568} $y={111}>1</Badge>
      <Badge $x={555} $y={351}>2</Badge>
      <Badge $x={347} $y={516}>3</Badge>
      <Badge $x={528} $y={546}>4</Badge>
      <HandCursor width="18" height="24" viewBox="0 0 18 24">
        <path d="M6 3C6 1 8 1 8 3V2C8 .5 10.500 .5 10.500 2v.5C10.500 1 13 1 13 3v2c0-1.500 2.500-1.500 2.500 .5V15c0 5-2.500 8-6.500 8H7c-2 0-3-1.500-4-3L.8 15c-.8-2 1.700-3 2.700-1.500L6 16z" fill="#fff" stroke="#222" strokeWidth=".6" />
        <path d="M8 3v9M10.500 2.500v9.500M13 5v7" stroke="#222" strokeWidth=".8" />
      </HandCursor>
    </Screen>
  );
}
